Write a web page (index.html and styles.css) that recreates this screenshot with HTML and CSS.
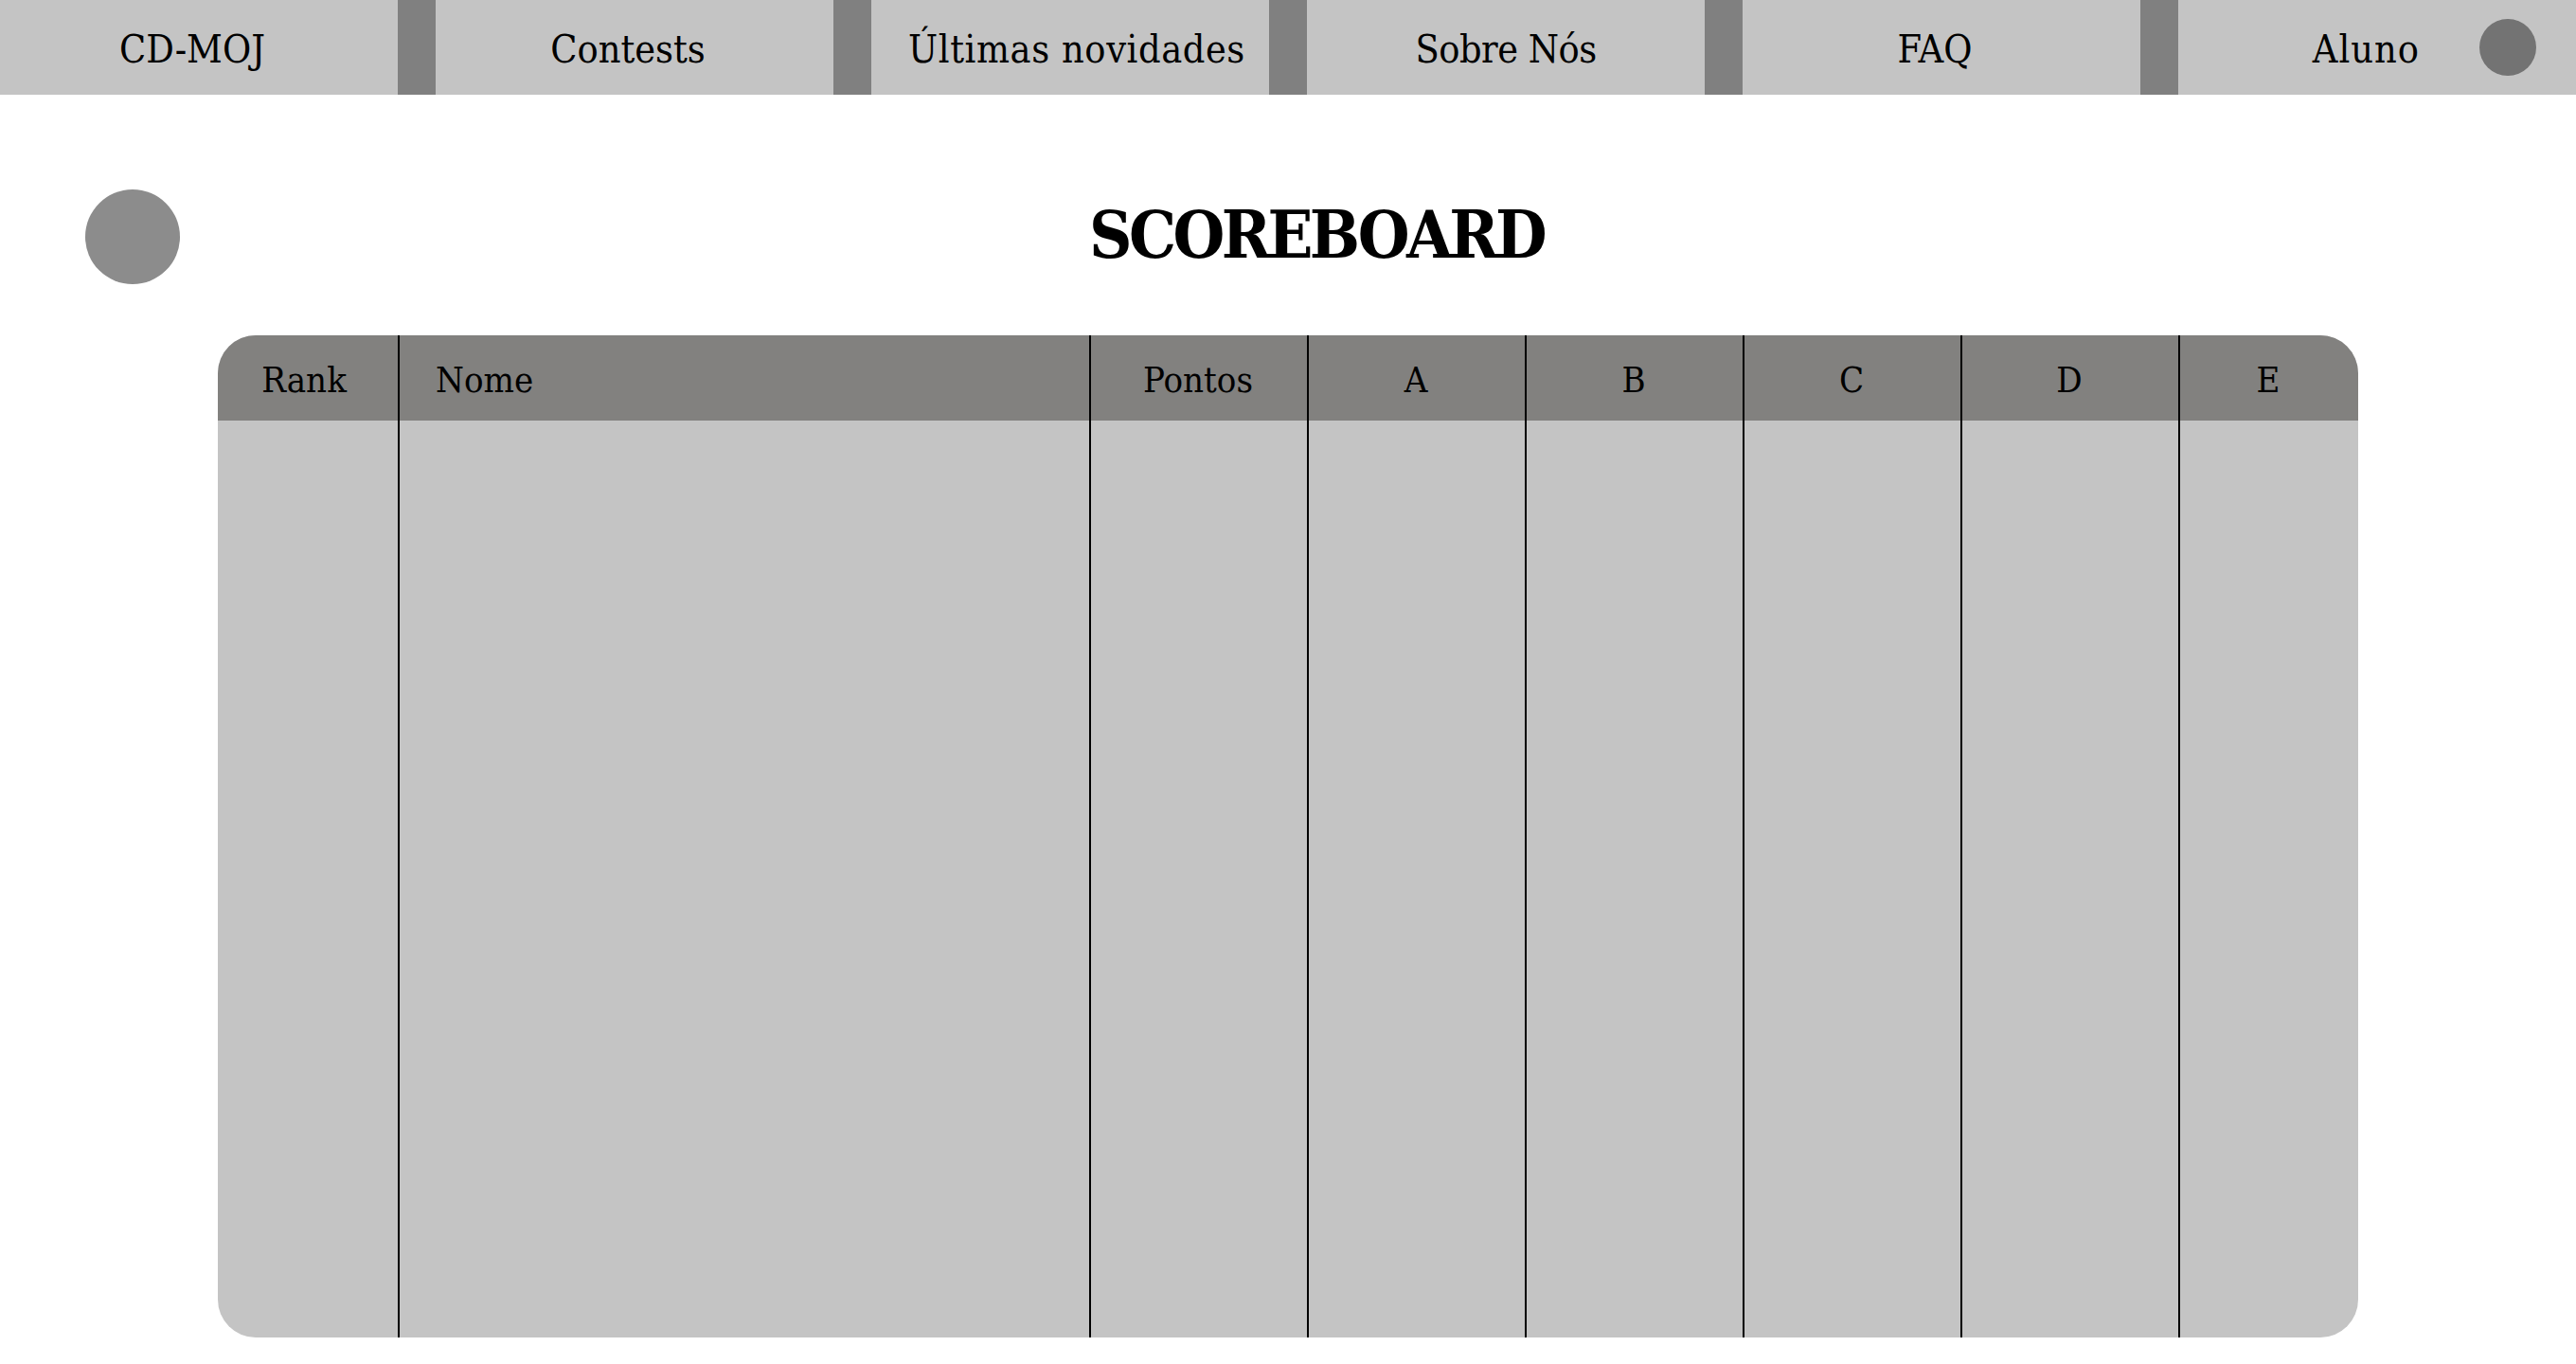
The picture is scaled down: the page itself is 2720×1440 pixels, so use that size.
FILE: index.html
```html
<!DOCTYPE html>
<html lang="en">
<head>
    <meta charset="UTF-8">
    <meta name="viewport" content="width=device-width, initial-scale=1.0">
    <title>Scoreboard</title>
    <link rel="stylesheet" href="styles.css">
</head>
<body>
    <nav class="navbar">
        <a class="nav-item nav-left">CD-MOJ</a>
        <a class="nav-item nav-left">Contests</a>
        <a class="nav-item nav-news">Últimas novidades</a>
        <a class="nav-item nav-about">Sobre Nós</a>
        <a class="nav-item nav-left">FAQ</a>
        <a class="nav-item nav-user">
            <span class="user-name">Aluno</span>
            <span class="user-avatar"></span>
        </a>
    </nav>

    <div class="title-row">
        <span class="back-button"></span>
        <h1 class="title">SCOREBOARD</h1>
    </div>

    <div class="board">
        <div class="board-col col-rank">
            <div class="col-head">Rank</div>
            <div class="col-body"></div>
        </div>
        <div class="board-col col-name">
            <div class="col-head">Nome</div>
            <div class="col-body"></div>
        </div>
        <div class="board-col col-points">
            <div class="col-head">Pontos</div>
            <div class="col-body"></div>
        </div>
        <div class="board-col col-problem">
            <div class="col-head">A</div>
            <div class="col-body"></div>
        </div>
        <div class="board-col col-problem">
            <div class="col-head">B</div>
            <div class="col-body"></div>
        </div>
        <div class="board-col col-problem">
            <div class="col-head">C</div>
            <div class="col-body"></div>
        </div>
        <div class="board-col col-problem">
            <div class="col-head">D</div>
            <div class="col-body"></div>
        </div>
        <div class="board-col col-last">
            <div class="col-head">E</div>
            <div class="col-body"></div>
        </div>
    </div>
</body>
</html>
```

FILE: styles.css
```css
body {
    margin: 0;
    background-color: #fff;
    color: #000;
    font-family: "DejaVu Serif Condensed", "DejaVu Serif", serif;
}

.navbar {
    display: grid;
    grid-template-columns: repeat(6, 1fr);
    gap: 40px;
    height: 100px;
    background-color: #808080;
}

.nav-item {
    display: flex;
    align-items: center;
    justify-content: center;
    padding-top: 4px;
    box-sizing: border-box;
    background-color: #c4c4c4;
    font-size: 41px;
}

.nav-left {
    padding-right: 14px;
}

.nav-news {
    padding-left: 14px;
    letter-spacing: 0.6px;
}

.nav-about {
    letter-spacing: -0.5px;
}

.nav-user {
    justify-content: flex-end;
    padding-top: 0;
    padding-right: 42px;
}

.user-name {
    margin-right: 63px;
    padding-top: 4px;
    letter-spacing: 1px;
}

.user-avatar {
    width: 60px;
    height: 60px;
    border-radius: 50%;
    background-color: #737373;
}

.title-row {
    display: flex;
    align-items: center;
    height: 100px;
    margin-top: 100px;
    padding-left: 90px;
}

.back-button {
    width: 100px;
    height: 100px;
    border-radius: 50%;
    background-color: #8c8c8c;
}

.title {
    margin: 0 0 4px 960px;
    font-size: 70px;
    font-weight: 700;
    letter-spacing: -3.6px;
    line-height: 1;
}

.board {
    display: flex;
    width: 2260px;
    height: 1058px;
    margin: 54px 0 0 230px;
    border-radius: 40px;
    overflow: hidden;
    background-color: #c4c4c4;
}

.board-col {
    display: flex;
    flex-direction: column;
    box-sizing: border-box;
    border-right: 2px solid #000;
    font-size: 38px;
}

.col-rank { width: 192px; }
.col-name { width: 730px; }
.col-points, .col-problem { width: 230px; }
.col-last { width: 188px; border-right: none; }

.col-head {
    display: flex;
    align-items: center;
    justify-content: center;
    height: 90px;
    padding: 4px 2px 0 0;
    box-sizing: border-box;
    background-color: #82817f;
}

.col-rank .col-head {
    padding-right: 8px;
}

.col-name .col-head {
    justify-content: flex-start;
    padding-left: 38px;
}

.col-body {
    flex: 1;
}
```
